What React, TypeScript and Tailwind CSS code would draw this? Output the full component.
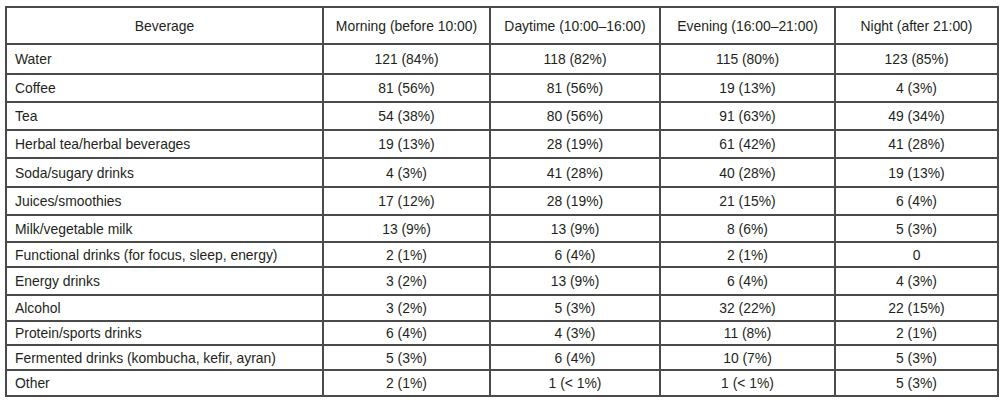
const headers = ['Beverage', 'Morning (before 10:00)', 'Daytime (10:00–16:00)', 'Evening (16:00–21:00)', 'Night (after 21:00)']

const rows: string[][] = [
  ['Water', '121 (84%)', '118 (82%)', '115 (80%)', '123 (85%)'],
  ['Coffee', '81 (56%)', '81 (56%)', '19 (13%)', '4 (3%)'],
  ['Tea', '54 (38%)', '80 (56%)', '91 (63%)', '49 (34%)'],
  ['Herbal tea/herbal beverages', '19 (13%)', '28 (19%)', '61 (42%)', '41 (28%)'],
  ['Soda/sugary drinks', '4 (3%)', '41 (28%)', '40 (28%)', '19 (13%)'],
  ['Juices/smoothies', '17 (12%)', '28 (19%)', '21 (15%)', '6 (4%)'],
  ['Milk/vegetable milk', '13 (9%)', '13 (9%)', '8 (6%)', '5 (3%)'],
  ['Functional drinks (for focus, sleep, energy)', '2 (1%)', '6 (4%)', '2 (1%)', '0'],
  ['Energy drinks', '3 (2%)', '13 (9%)', '6 (4%)', '4 (3%)'],
  ['Alcohol', '3 (2%)', '5 (3%)', '32 (22%)', '22 (15%)'],
  ['Protein/sports drinks', '6 (4%)', '4 (3%)', '11 (8%)', '2 (1%)'],
  ['Fermented drinks (kombucha, kefir, ayran)', '5 (3%)', '6 (4%)', '10 (7%)', '5 (3%)'],
  ['Other', '2 (1%)', '1 (< 1%)', '1 (< 1%)', '5 (3%)'],
]

export default function App() {
  return (
    <div className="w-[1006px] h-[404px] bg-white pl-[5px] pt-[6px] font-['Liberation_Sans',Arial,sans-serif] text-[13.9px] text-[#231f20]">
      <div className="w-[994px] grid grid-cols-[315px_165px_168px_173px_161px] grid-rows-[35px_28px_26px_26px_26px_27px_26px_25px_23px_26px_24px_22px_23px_24px] gap-[2px] p-[2px] bg-[#4a4a4a]">
        {headers.map((h, i) => (
          <div key={i} className="bg-white flex items-center justify-center pt-[1px]">
            {h}
          </div>
        ))}
        {rows.map((r, ri) =>
          r.map((c, ci) => (
            <div
              key={`${ri}-${ci}`}
              className={`bg-white flex items-center pt-[1px] ${ci === 0 ? 'pl-[8px]' : 'justify-center'}`}
            >
              {c}
            </div>
          ))
        )}
      </div>
    </div>
  )
}
